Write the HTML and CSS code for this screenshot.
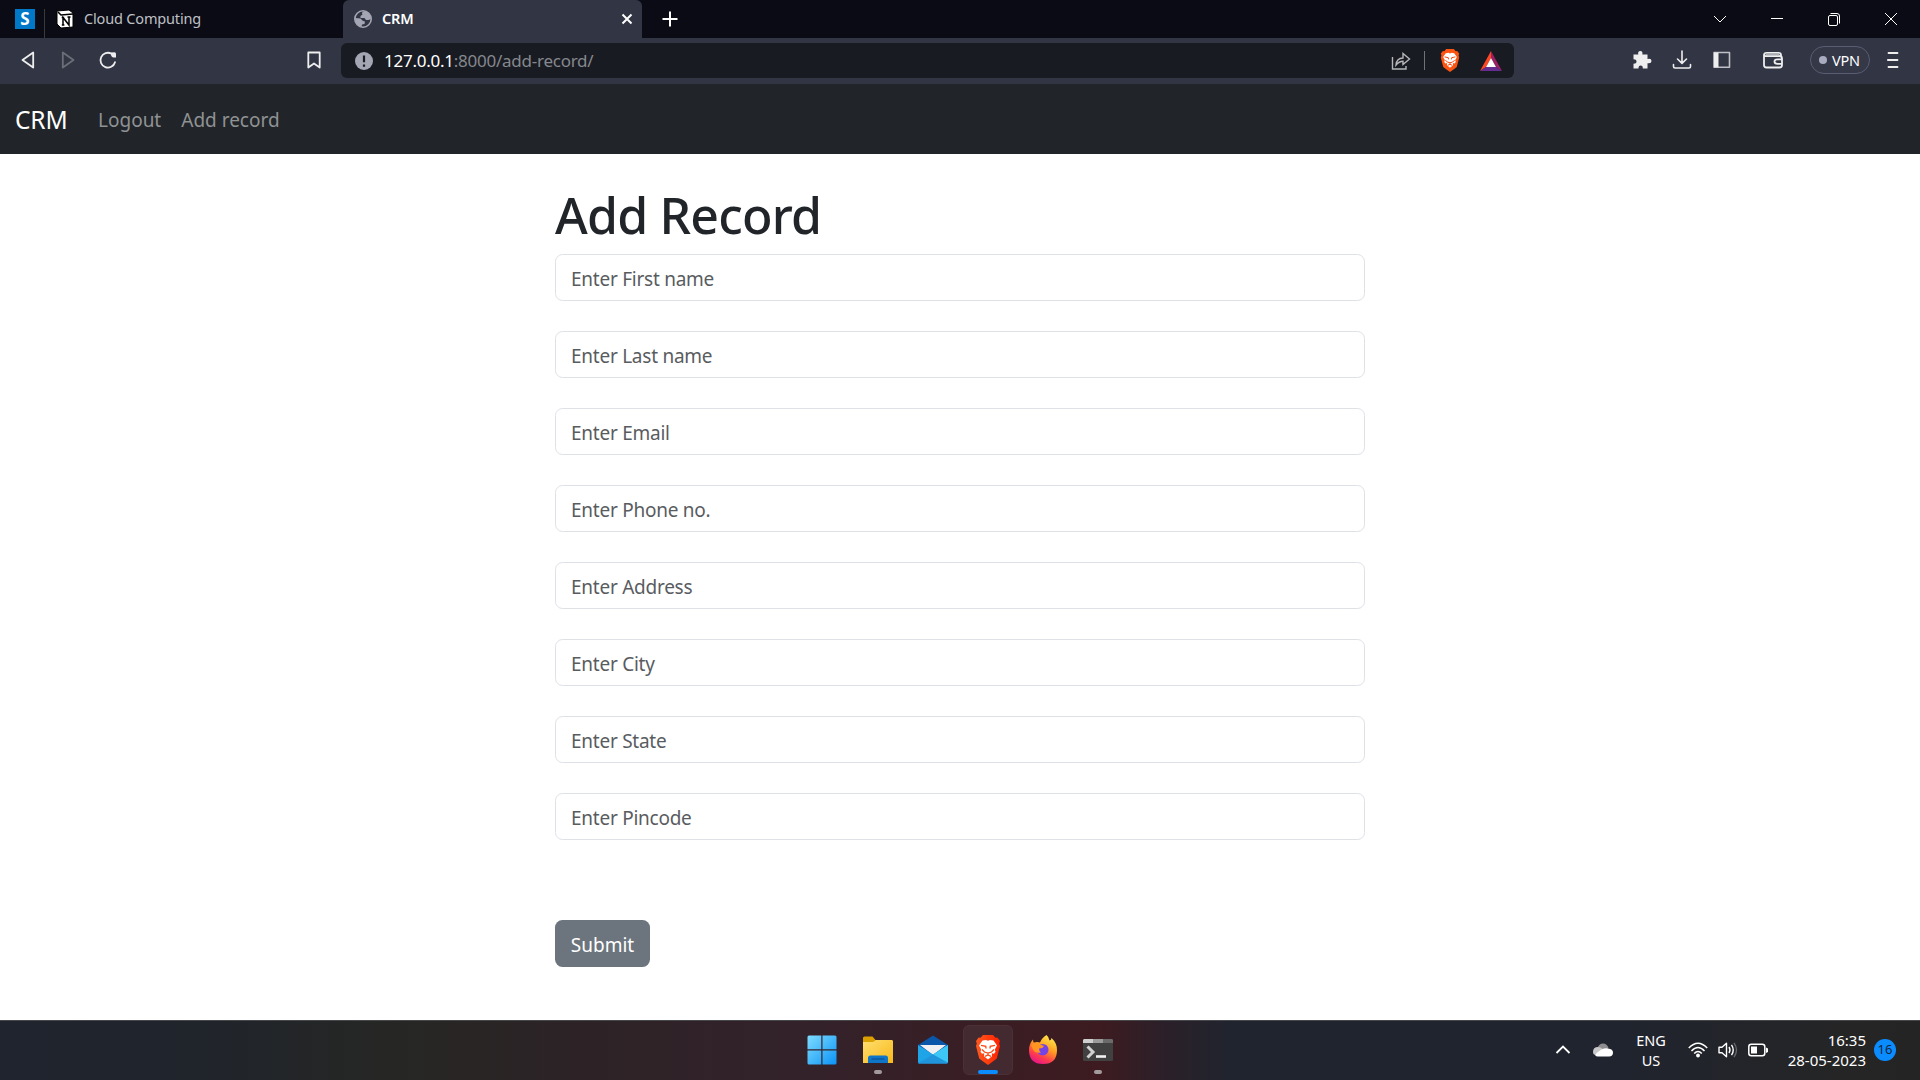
FILE: index.html
```html
<!DOCTYPE html>
<html lang="en">
<head>
<meta charset="utf-8">
<title>CRM</title>
<link rel="stylesheet" href="styles.css">
</head>
<body>
<svg class="defs" width="0" height="0">
  <defs>
    <linearGradient id="lion" x1="0" y1="0" x2="1" y2="0"><stop offset="0" stop-color="#ff5a1f"/><stop offset="1" stop-color="#ff2000"/></linearGradient>
    <linearGradient id="win" x1="0" y1="0" x2="1" y2="1"><stop offset="0" stop-color="#7fdcff"/><stop offset="1" stop-color="#0b93f5"/></linearGradient>
    <linearGradient id="folder" x1="0" y1="0" x2="1" y2="1"><stop offset="0" stop-color="#ffdf70"/><stop offset="1" stop-color="#f8b818"/></linearGradient>
    <linearGradient id="fox" x1="0.8" y1="0" x2="0.3" y2="1"><stop offset="0" stop-color="#fff44f"/><stop offset="0.45" stop-color="#ff9a22"/><stop offset="0.75" stop-color="#ff3d4d"/><stop offset="1" stop-color="#e5148c"/></linearGradient>
    <symbol id="lion-face" viewBox="0 0 26 30">
      <path d="M8 0h10l2.500 2.800 1.800-.2L25 6l-.8 2.500.8 2.500-3.200 12.500L18.500 26 13 30l-5.500-4-3.300-2.500L1 11l.8-2.500L1 6l2.700-3.400 1.800.2z"/>
      <path fill="#fff" d="M7.500 5.500L11 5l2 .8 2-.8 3.500.5 3.500 5-2.200 4 .7 2.300-1.500 2-2.200-.6.200 3L13 24.500 9 21.200l.2-3-2.200.6-1.500-2 .7-2.300-2.200-4z"/>
      <path class="lion-cut" d="M6 10.300l4.800 1L11 13.500M20 10.300l-4.800 1L15 13.500M7 14.500l2.500 2.500L13 18l3.500-1L19 14.500M13 18v1.500M10 21.300l3-1.300 3 1.300"/>
    </symbol>
  </defs>
</svg>

<header class="browser">
  <div class="tabstrip">
    <div class="pinned">S</div>
    <div class="tab">
      <svg class="notion" width="18" height="20" viewBox="0 0 18 20"><path d="M1 2l12-1 4 3v14l-12 1-4-4z" fill="#fff" stroke="#000"/><path d="M2 3l3 3 12-1" fill="none" stroke="#000" stroke-width="1.500"/><path d="M7 16V8.500l6 7.500V8M5.700 8.500h2.500M5.800 16h2.600M11.500 8h3" fill="none" stroke="#000" stroke-width="1.500"/></svg>
      <span class="tab-title">Cloud Computing</span>
    </div>
    <div class="tab active">
      <svg width="18" height="18" viewBox="0 0 18 18"><circle cx="9" cy="9" r="8.200" fill="#323544" stroke="#a4a6b3" stroke-width="1.600"/><path d="M10.500 1C8 2 7.500 3 8.500 4.500L6.500 6v2h4l1.500 2h2.500L17 9Q17 3 10.500 1zM1 8l5.500.5L9 11l2 .5-.5 2.500-2.500.5-.5 2.500Q1 15 1 8z" fill="#a4a6b3"/></svg>
      <span class="tab-title">CRM</span>
      <svg class="tab-close" width="12" height="12" viewBox="0 0 12 12"><path d="M1.500 1.500l9 9M10.500 1.500l-9 9" stroke="#fff" stroke-width="2"/></svg>
    </div>
    <svg class="new-tab" width="16" height="16" viewBox="0 0 16 16"><path d="M8 .5v15M.5 8h15" stroke="#fff" stroke-width="2"/></svg>
    <div class="window-controls">
      <svg width="14" height="14" viewBox="0 0 14 14"><path d="M1 4l6 6 6-6"/></svg>
      <svg width="14" height="14" viewBox="0 0 14 14"><path d="M1 6.500h12"/></svg>
      <svg width="14" height="14" viewBox="0 0 14 14"><rect x="1.500" y="3.500" width="9" height="10" rx="1.500"/><path d="M3.500 1.500h6.500q2.500 0 2.500 2.500v7.500"/></svg>
      <svg width="14" height="14" viewBox="0 0 14 14"><path d="M1 1l12 12M13 1L1 13"/></svg>
    </div>
  </div>

  <div class="toolbar">
    <div class="nav-buttons">
      <svg width="20" height="20" viewBox="0 0 20 20"><path d="M15.200 2.500v15L4.500 10z" class="line"/></svg>
      <svg class="dim" width="20" height="20" viewBox="0 0 20 20"><path d="M4.800 2.500v15L15.500 10z" class="line"/></svg>
      <svg width="20" height="20" viewBox="0 0 20 20"><path d="M17 12.200a7.400 7.400 0 1 1-3.500-8.500" class="line"/><path d="M13 2.500l3.500-.2q1.500.2 1.500 1.700V7.500q-4.500.5-5-2.500z" fill="#eee"/></svg>
    </div>
    <svg class="bookmark" width="20" height="20" viewBox="0 0 20 20"><path d="M4.300 2.500h11.400v15L10 13.500l-5.700 4z" class="line"/></svg>
    <div class="omnibox">
      <svg width="18" height="18" viewBox="0 0 18 18"><circle cx="9" cy="9" r="9" fill="#a4a6b3"/><path d="M9 3.500v6.800M9 12.500v2.300" stroke="#191b22" stroke-width="2.200"/></svg>
      <div class="url"><span class="host">127.0.0.1</span><span class="path">:8000/add-record/</span></div>
      <svg class="share" width="20" height="20" viewBox="0 0 20 20"><path d="M1.500 6v12h13.500v-3M5 14c.5-5 3-7 7-7V2.500l6.500 5.500L12 13.500V10.200q-4 0-7 3.800z" fill="none" stroke="#b5b7b9" stroke-width="1.400"/></svg>
      <i class="sep"></i>
      <svg class="shield" width="20" height="23" viewBox="0 0 26 30"><use href="#lion-face"/></svg>
      <svg class="bat" width="22" height="20" viewBox="0 0 22 20"><path d="M11 0L0 20l6-4 5-9z" fill="#ff4724"/><path d="M11 0l11 20-6-4-5-9z" fill="#9e1f63"/><path d="M0 20h22l-6-4H6z" fill="#662d91"/><path d="M11 7l5 9H6z" fill="#fff"/></svg>
    </div>
    <div class="extensions">
      <svg width="20" height="20" viewBox="0 0 20 20"><path d="M1.500 4.500H6.300Q5.500 1 8.300 1t2 3.500H15.500V9Q19.500 8 19.500 11t-4 2.200V18.500H10.800Q11 15.500 8.700 15.500T6.500 18.500H1.500V13.700Q4.500 13.700 4.500 11.500T1.500 9.300z" fill="#eee"/></svg>
      <svg width="20" height="20" viewBox="0 0 20 20"><path d="M10 1v12M5.500 9l4.500 4.300L14.500 9M1.500 14.500v2q0 1.500 1.500 1.500h14q1.500 0 1.500-1.500v-2" class="line thin"/></svg>
      <svg width="20" height="20" viewBox="0 0 20 20"><path d="M2 2.500h15.500v14.800H2z" class="line side"/><path d="M2 2.500h4.500v14.800H2z" fill="#eee"/></svg>
      <svg class="wallet" width="22" height="20" viewBox="0 0 22 20"><path d="M19 6.500V5q0-2.200-2.500-2.200h-12Q2 2.800 2 5v10q0 2.500 2.500 2.500h13q2.500 0 2.500-2.500V8.500Q20 6 17.500 6H3M20 9.300h-4.500q-3 0-3 2.300t3 2.300H20" class="line"/><path d="M3.500 3.500h14v2h-14z" fill="#a9abb2"/></svg>
    </div>
    <div class="vpn"><i></i>VPN</div>
    <svg class="menu" width="12" height="18" viewBox="0 0 12 18"><path d="M1.500 2h9M.8 9h9.700M1.500 16h9" class="line"/></svg>
  </div>
</header>

<nav class="navbar">
  <a class="brand">CRM</a>
  <a class="nav-link">Logout</a>
  <a class="nav-link add">Add record</a>
</nav>

<main class="content">
  <form class="record-form">
    <h1>Add Record</h1>
    <input type="text" placeholder="Enter First name">
    <input type="text" placeholder="Enter Last name">
    <input type="text" placeholder="Enter Email">
    <input type="text" placeholder="Enter Phone no.">
    <input type="text" placeholder="Enter Address">
    <input type="text" placeholder="Enter City">
    <input type="text" placeholder="Enter State">
    <input type="text" placeholder="Enter Pincode">
    <button type="button">Submit</button>
  </form>
</main>

<footer class="taskbar">
  <div class="apps">
    <div class="app start"><svg width="30" height="30" viewBox="0 0 30 30"><path d="M.5 2q0-1.500 1.500-1.500h12.300v13.800H.5zM15.500.5H28q1.500 0 1.500 1.500v12.300h-14zM.5 15.500h13.800v14H2q-1.500 0-1.500-1.500zM15.500 15.500h14V28q0 1.500-1.500 1.500H15.500z" fill="url(#win)"/></svg></div>
    <div class="app running"><svg width="30" height="30" viewBox="0 0 30 30"><path d="M0 3q0-1.500 1.500-1.500h8l3 3.500H28q2 0 2 2v3H0z" fill="#dca000"/><path d="M0 7h10l3-2h15.500q1.500 0 1.500 1.500V28H0z" fill="url(#folder)"/><path d="M5 28v-5q0-2.500 2.500-2.500h15Q25 20.500 25 23v5z" fill="#0e75c8"/><path d="M9 24h12" stroke="#084b83" stroke-width="1.200" stroke-linecap="round"/></svg></div>
    <div class="app"><svg width="30" height="30" viewBox="0 0 30 30"><path d="M0 10L15 .5 30 10v8H0z" fill="#0a56a8"/><path d="M2 10h26L15 20z" fill="#f0f0f2"/><path d="M0 10l15 9.500L30 10v17q0 1.500-1.500 1.500h-27Q0 28.500 0 27z" fill="#1fa4e8"/><path d="M15 19.500L30 10v17.500z" fill="#3dc7f5"/><path d="M15 19.500l14.500 8.700-1 .3H0z" fill="#2095db"/></svg></div>
    <div class="app focused"><svg class="brave-app" width="26" height="30" viewBox="0 0 26 30"><use href="#lion-face"/></svg></div>
    <div class="app"><svg width="30" height="30" viewBox="0 0 30 30"><path d="M18.500 0q2.500 2 3 5.500 2-.5 2-2.500Q29 8 29 15q0 14-14 14T1 15Q1 9 5 4.500q0 2.500 1 3 3-1 6 0 2-5 6.500-7.500z" fill="url(#fox)"/><circle cx="14.700" cy="14.700" r="5.800" fill="#7542e5"/><path d="M3 10q5-3 9-.5l4 1.500q-1 2.500-5 2.500 0 3 2 4-6 1-8-3z" fill="#ff9420"/></svg></div>
    <div class="app running"><svg width="30" height="22" viewBox="0 0 30 22"><rect width="30" height="22" rx="1.500" fill="#414141"/><path d="M1 0h9v4H0V1z" fill="#cfcfcf"/><path d="M10 0h10v4H10z" fill="#9b9b9b"/><path d="M20 0h9l1 1v3H20z" fill="#6b6b6b"/><path d="M4.500 7.500L10 13l-5.500 5.500" fill="none" stroke="#d2d2d2" stroke-width="3"/><path d="M13 17.500h10" stroke="#f1f1f1" stroke-width="2.600"/></svg></div>
  </div>
  <div class="tray">
    <svg width="16" height="12" viewBox="0 0 16 12"><path d="M1.500 9L8 2.500 14.500 9" fill="none" stroke="#fff" stroke-width="1.800"/></svg>
    <svg class="cloud" width="20" height="14" viewBox="0 0 20 14"><path d="M4.500 5Q6 .5 10 .5T15.500 5l-5 4z" fill="#8e8e90"/><path d="M0 9q0-5 5-5 3 0 6 3l-8 5Q0 12 0 9z" fill="#c8c8c9"/><path d="M2 12q4-5 9-6.500 2-.7 4 0Q20 6 20 9.500q0 4-4 4H5q-2 0-3-1.500z" fill="#fff"/></svg>
    <div class="language"><span>ENG</span><span>US</span></div>
    <div class="status">
      <svg width="20" height="16" viewBox="0 0 20 16"><path d="M.8 6Q10-3.500 19.200 6M3.500 9Q10 2 16.500 9M6.200 11.500Q10 7.500 13.800 11.500" fill="none" stroke="#fff" stroke-width="1.500"/><circle cx="10" cy="13.500" r="1.900" fill="#fff"/></svg>
      <svg width="20" height="16" viewBox="0 0 20 16"><path d="M1 5.300h3L8.500 1.300v13.400L4 10.700H1z" fill="none" stroke="#fff" stroke-width="1.400" stroke-linejoin="round"/><path d="M11 5q2 3 0 6M13.500 2.800q3.500 5.200 0 10.400" fill="none" stroke="#fff" stroke-width="1.400"/><path d="M16 .8q5 7.200 0 14.400" fill="none" stroke="#67696e" stroke-width="1.300"/></svg>
      <svg width="20" height="16" viewBox="0 0 20 16"><rect x=".8" y="2.300" width="16" height="11.400" rx="2.500" fill="none" stroke="#fff" stroke-width="1.500"/><rect x="3" y="4.500" width="6" height="7" fill="#fff"/><path d="M18 5.500l2 1v3.500l-2 1z" fill="#fff"/></svg>
    </div>
    <div class="clock"><span>16:35</span><span>28-05-2023</span></div>
    <div class="badge">16</div>
  </div>
</footer>
</body>
</html>
```

FILE: styles.css
```css
* { box-sizing: border-box; }

body {
  margin: 0;
  height: 1080px;
  display: flex;
  flex-direction: column;
  overflow: hidden;
  background: #fff;
  color: #212529;
  font-family: "Noto Sans", "Open Sans", sans-serif;
}

svg { display: block; flex: none; }
.defs { position: absolute; }

/* Browser chrome */
.tabstrip {
  height: 38px;
  display: flex;
  align-items: center;
  background: #0b0b15;
}

.pinned {
  width: 20px;
  height: 20px;
  margin: 0 9px 0 15px;
  background: #0078c8;
  color: #fff;
  font-size: 17px;
  font-weight: 700;
  line-height: 20px;
  text-align: center;
}

.tab {
  width: 299px;
  height: 38px;
  display: flex;
  align-items: center;
  color: #bfc0c5;
  font-size: 14.500px;
  letter-spacing: -0.17px;
}

.tab:not(.active)::before {
  content: "";
  width: 1px;
  height: 29px;
  align-self: flex-end;
  margin-right: 11px;
  background: #3a3a3c;
}

.tab-title { padding-bottom: 2px; }
.notion { margin-right: 10px; }

.tab.active {
  padding: 0 9px 0 11px;
  border-radius: 6px 6px 0 0;
  background: #323544;
  color: #fff;
  font-size: 14.500px;
  font-weight: 600;
}

.tab.active .tab-title { margin-left: 10px; }
.tab-close { margin-left: auto; }
.new-tab { margin-left: 20px; }

.window-controls {
  display: flex;
  gap: 43px;
  margin-left: auto;
  margin-right: 22px;
  fill: none;
  stroke: #fff;
  stroke-width: 1;
}

.toolbar {
  height: 46px;
  display: flex;
  align-items: center;
  padding: 0 21px 2px 18px;
  background: #323544;
}

.line { fill: none; stroke: #eee; stroke-width: 1.8; stroke-linejoin: round; stroke-linecap: round; }
.line.thin { stroke-width: 1.6; }
.line.side { stroke: #bfc0c6; stroke-width: 1.600; }
.dim { opacity: 0.3; }
.nav-buttons { display: flex; gap: 20px; margin-right: 186px; }

.omnibox {
  width: 1173px;
  height: 35px;
  display: flex;
  align-items: center;
  margin: 1px 0 0 17px;
  padding: 0 12px 0 14px;
  border-radius: 6px;
  background: #191b22;
}

.url { margin-left: 11px; font-size: 17px; letter-spacing: -0.25px; white-space: nowrap; }
.host { color: #fff; }
.path { color: #85888e; }
.share { margin-left: auto; }
.sep { width: 1px; height: 19px; margin: 0 15px 0 13px; background: #707278; }
.shield { fill: #fb5412; }
.lion-cut { fill: none; stroke: #fb4510; stroke-width: 1.300; }
.bat { margin-left: 20px; }

.extensions { display: flex; gap: 20px; margin-left: 118px; }
.wallet { margin-left: 10px; }

.vpn {
  width: 60px;
  height: 28px;
  display: flex;
  align-items: center;
  gap: 5px;
  margin-left: auto;
  padding: 0 0 1px 8px;
  border: 1px solid #5a5d72;
  border-radius: 14px;
  background: #353847;
  color: #fff;
  font-size: 14.500px;
  letter-spacing: -0.2px;
}

.vpn i { width: 8px; height: 8px; border-radius: 50%; background: #a9abc0; }
.menu { margin-left: 17px; }

/* Site navigation */
.navbar {
  height: 70px;
  display: flex;
  align-items: center;
  padding: 1px 15px 0;
  background: #212529;
}

.brand { width: 83px; color: #fff; font-size: 24.500px; letter-spacing: -0.15px; }
.nav-link { color: #909294; font-size: 19px; }
.add { margin-left: 20px; }

/* Record form */
.content { flex: 1; display: flex; justify-content: center; }

.record-form {
  width: 810px;
  display: flex;
  flex-direction: column;
  align-items: stretch;
  gap: 30px;
  padding-top: 30px;
}

.record-form h1 {
  height: 60px;
  margin: 0 0 -20px;
  font-size: 50px;
  font-weight: 500;
  line-height: 62px;
  letter-spacing: -0.8px;
}

.record-form input {
  height: 47px;
  padding: 2px 15px 0;
  border: 1px solid #dee2e6;
  border-radius: 7.500px;
  background: #fff;
  font: 19px "Noto Sans", "Open Sans", sans-serif;
  letter-spacing: -0.25px;
}

.record-form input::placeholder { color: #595c5f; opacity: 1; }

.record-form button {
  width: 95px;
  height: 47px;
  margin-top: 50px;
  padding: 3px 0 0;
  border: 0;
  border-radius: 7.500px;
  background: #6c757d;
  color: #fff;
  font: 19px "Noto Sans", "Open Sans", sans-serif;
}

/* Taskbar */
.taskbar {
  height: 60px;
  display: flex;
  align-items: stretch;
  padding-bottom: 1px;
  border-top: 1px solid #45474a;
  background: linear-gradient(90deg, #1f242e 0, #20242b 200px, #262724 400px, #2c2326 560px, #33222a 800px, #3d1b20 1100px, #2b2029 1165px, #20242e 1230px, #20242e 1620px, #252525 1860px, #242424 100%);
  color: #fff;
}

.apps { display: flex; align-items: center; gap: 5px; padding-left: 798px; }

.app {
  width: 50px;
  height: 50px;
  display: flex;
  flex-direction: column;
  align-items: center;
  justify-content: center;
  position: relative;
}

.start { padding-right: 3px; }
.app::after { position: absolute; bottom: 1px; height: 4px; border-radius: 2px; }
.running::after { content: ""; width: 8px; background: #a29a9c; }
.focused { border: 1px solid #4d3035; border-radius: 6px; background: #432930; }
.focused::after { content: ""; width: 20px; bottom: 0; background: #0a8cff; }
.brave-app { fill: url(#lion); }

.tray { display: flex; align-items: center; margin-left: auto; padding-right: 24px; }
.cloud { margin-left: 22px; }

.language {
  width: 36px;
  display: flex;
  flex-direction: column;
  align-items: center;
  margin-left: 20px;
  font-size: 14.500px;
  line-height: 20px;
}

.status { display: flex; gap: 10px; margin-left: 19px; }

.clock {
  width: 90px;
  display: flex;
  flex-direction: column;
  align-items: flex-end;
  margin-left: 8px;
  font-size: 15px;
  line-height: 20px;
}

.badge {
  width: 22px;
  height: 22px;
  margin-left: 8px;
  border-radius: 50%;
  background: #0a8cff;
  color: #10263a;
  font-size: 13px;
  line-height: 21px;
  text-align: center;
}
```
